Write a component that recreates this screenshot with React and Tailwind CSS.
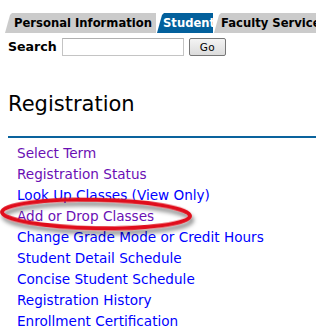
import React from "react";

const links = [
  { t: "Select Term", v: true },
  { t: "Registration Status", v: true },
  { t: "Look Up Classes (View Only)", v: false },
  { t: "Add or Drop Classes", v: true },
  { t: "Change Grade Mode or Credit Hours", v: false },
  { t: "Student Detail Schedule", v: false },
  { t: "Concise Student Schedule", v: false },
  { t: "Registration History", v: false },
  { t: "Enrollment Certification", v: false },
];

function Tab({ label, active, width, textPad }) {
  return (
    <div
      className={`h-[20px] shrink-0 overflow-hidden whitespace-nowrap font-bold text-[11.6px] leading-[20px] [clip-path:polygon(0_100%,5px_2px,7px_0,100%_0,100%_100%)] ${
        active ? "bg-[#03609c] text-white" : "bg-[#cbcbcb] text-black"
      }`}
      style={{ width, paddingLeft: textPad }}
    >
      {label}
    </div>
  );
}

export default function App() {
  return (
    <div className="relative w-[316px] h-[331px] overflow-hidden bg-white font-['DejaVu_Sans',Verdana,sans-serif] text-black">
      {/* Tabs */}
      <div className="flex pt-[13px] pl-[5px] gap-[1px]">
        <Tab label="Personal Information" width={151} textPad={9} />
        <Tab label="Student" active width={56} textPad={6} />
        <Tab label="Faculty Services" width={140} textPad={7} />
      </div>

      {/* Search */}
      <div className="flex items-center mt-[5px] pl-[8px] h-[18px]">
        <span className="font-bold text-[12.6px] leading-[18px] w-[54px]">Search</span>
        <div className="w-[122px] h-[18px] border border-[#c4c4c4] border-t-[#b0b0b0] bg-white"></div>
        <div className="ml-[5px] w-[37px] h-[18px] rounded-[2px] border border-[#777] bg-gradient-to-b from-[#f4f4f4] to-[#dcdcdc] flex items-center justify-center text-[10.5px] leading-none tracking-[0.5px]">
          Go
        </div>
      </div>

      {/* Heading */}
      <div className="mt-[36px] pl-[8px] text-[21px] leading-[24px]">Registration</div>

      <div className="mt-[20px] ml-[8px] h-[2px] bg-[#0a639d]"></div>

      {/* Links */}
      <ul className="mt-[5px] pl-[17px]">
        {links.map((l) => (
          <li
            key={l.t}
            className={`text-[13.6px] leading-[21px] whitespace-nowrap ${
              l.v ? "text-[#6a0fb4]" : "text-[#0000ff]"
            }`}
          >
            {l.t}
          </li>
        ))}
      </ul>

      {/* Red ellipse annotation */}
      <svg
        className="absolute left-0 top-[190px] pointer-events-none"
        width="210"
        height="52"
        viewBox="0 0 210 52"
      >
        <defs>
          <filter id="sh" x="-10%" y="-40%" width="130%" height="190%">
            <feDropShadow dx="2" dy="4" stdDeviation="2.2" floodColor="#000" floodOpacity="0.5" />
          </filter>
        </defs>
        <ellipse
          cx="96"
          cy="24"
          rx="94"
          ry="14.2"
          fill="none"
          stroke="#e0101a"
          strokeWidth="4"
          transform="rotate(1.2 96 24)"
          filter="url(#sh)"
        />
      </svg>
    </div>
  );
}
